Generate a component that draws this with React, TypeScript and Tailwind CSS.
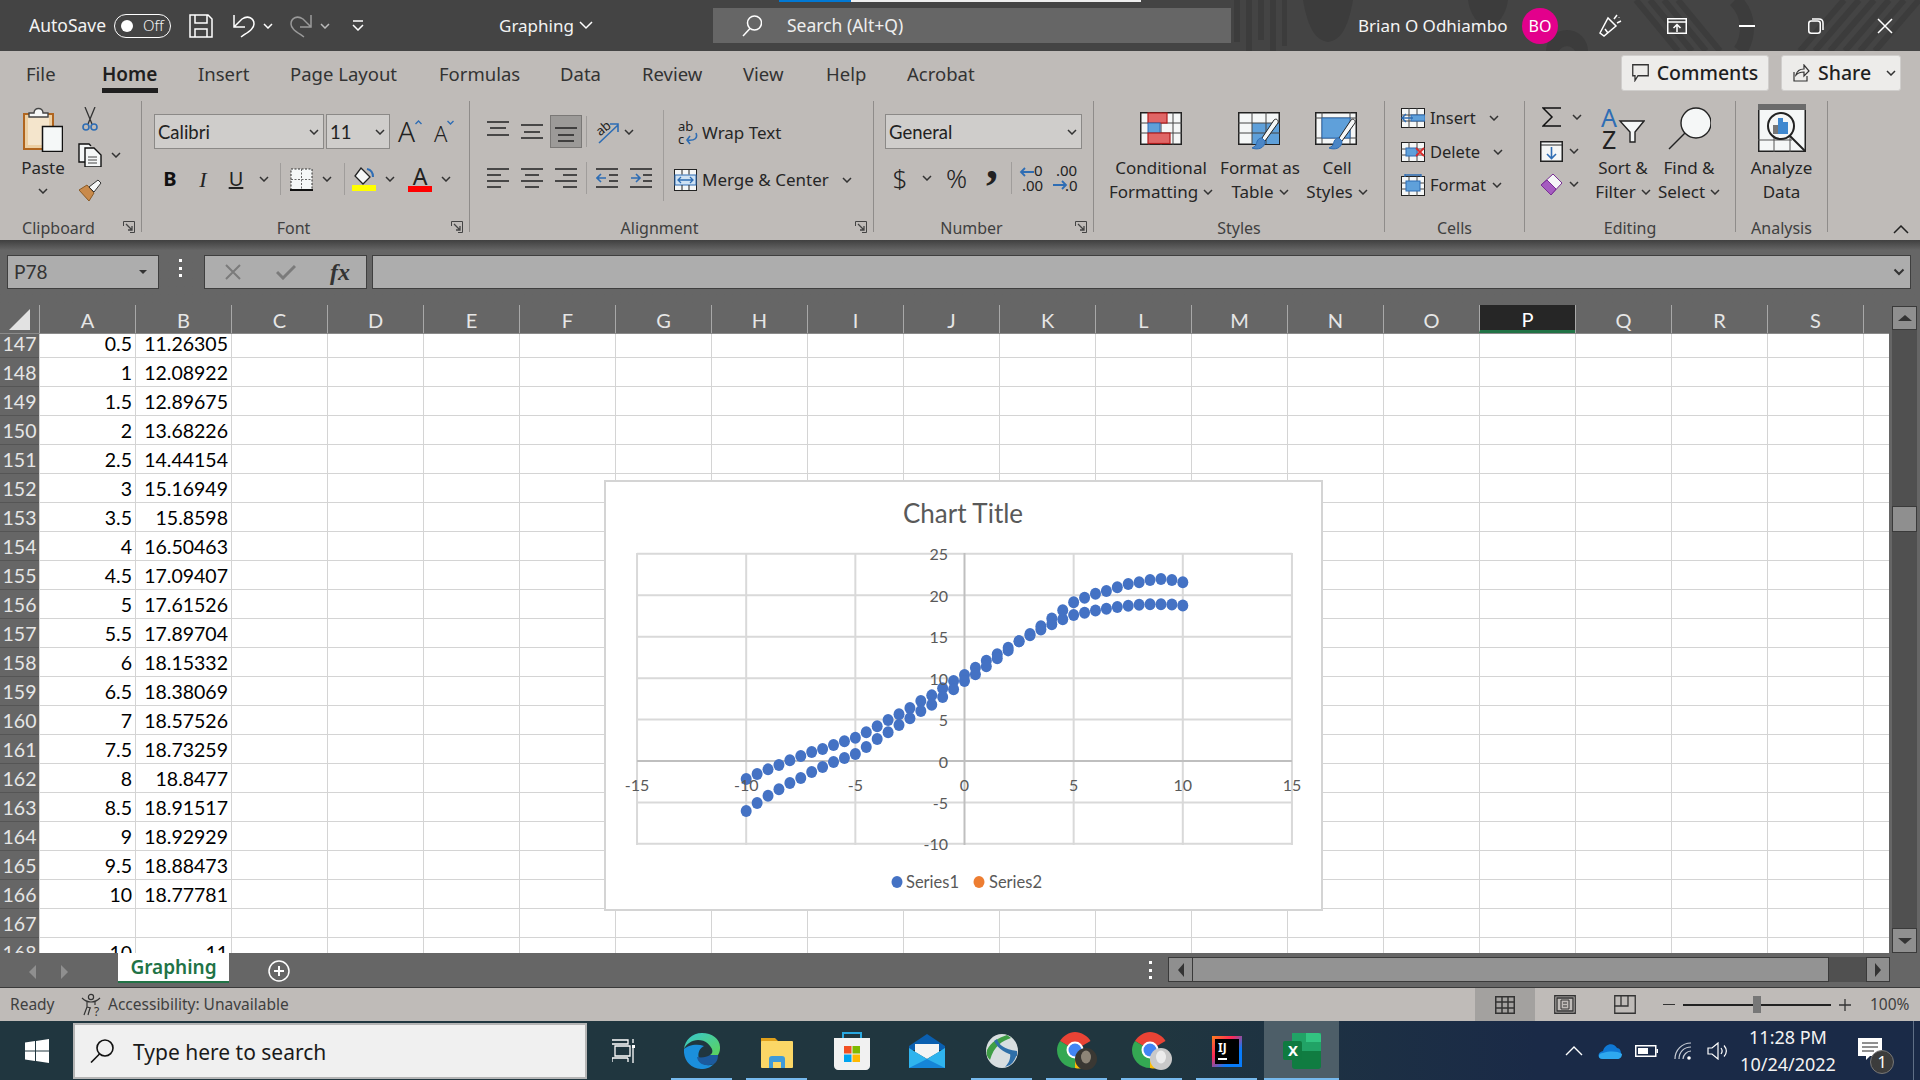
import React from "react";

const rows: [number, string, string][] = [
  [147, "0.5", "11.26305"],
  [148, "1", "12.08922"],
  [149, "1.5", "12.89675"],
  [150, "2", "13.68226"],
  [151, "2.5", "14.44154"],
  [152, "3", "15.16949"],
  [153, "3.5", "15.8598"],
  [154, "4", "16.50463"],
  [155, "4.5", "17.09407"],
  [156, "5", "17.61526"],
  [157, "5.5", "17.89704"],
  [158, "6", "18.15332"],
  [159, "6.5", "18.38069"],
  [160, "7", "18.57526"],
  [161, "7.5", "18.73259"],
  [162, "8", "18.8477"],
  [163, "8.5", "18.91517"],
  [164, "9", "18.92929"],
  [165, "9.5", "18.88473"],
  [166, "10", "18.77781"],
  [167, "", ""],
  [168, "10", "11"],
];

const cols = "ABCDEFGHIJKLMNOPQRS".split("");

const series1 = [
  -2.17, -1.57, -1.01, -0.48, 0.08, 0.6, 1.09, 1.45, 1.93, 2.37, 2.82, 3.46, 4.18, 4.95, 5.63, 6.4, 7.24, 7.92, 8.77, 9.65, 10.38,
  11.26305, 12.08922, 12.89675, 13.68226, 14.44154, 15.16949, 15.8598, 16.50463, 17.09407, 17.61526, 17.89704, 18.15332, 18.38069,
  18.57526, 18.73259, 18.8477, 18.91517, 18.92929, 18.88473, 18.77781,
];
const series2 = [
  -6.03, -5.07, -4.2, -3.4, -2.65, -2.05, -1.33, -0.72, -0.12, 0.36, 0.84, 1.69, 2.65, 3.46, 4.34, 5.15, 6.03, 6.8, 7.72, 8.65, 9.65,
  10.46, 11.42, 12.39, 13.35, 14.44, 15.33, 16.25, 17.2, 18.2, 19.15, 19.71, 20.19, 20.51, 20.96, 21.36, 21.56, 21.84, 21.96, 21.84, 21.56,
];

const px = (v: number) => 964.5 + 21.83 * v;
const py = (v: number) => 761 - 8.286 * v;

function Chev({ className = "", color = "#333333" }: { className?: string; color?: string }) {
  return (
    <svg width="10" height="6" viewBox="0 0 10 6" className={`shrink-0 ${className}`}>
      <path d="M1 1l4 4 4-4" fill="none" stroke={color} strokeWidth="1.5" />
    </svg>
  );
}

function Launcher() {
  return (
    <svg width="12" height="12" viewBox="0 0 12 12">
      <path d="M.5 5V.5h11v11H7" fill="none" stroke="#444" />
      <path d="M3 3l6 6M9 5v4H5" fill="none" stroke="#444" strokeWidth="1.3" />
    </svg>
  );
}

function Group({ w, label, launcher, children }: { w: string; label?: string; launcher?: boolean; children: React.ReactNode }) {
  return (
    <div className={`${w} h-[131px] shrink-0 flex flex-col border-r border-[#8f8c8a]`}>
      <div className="h-[115px] flex">{children}</div>
      <div className="h-[16px] flex text-[16px] leading-[24px] text-[#404040]">
        <div className="flex-1 text-center whitespace-nowrap">{label}</div>
        {launcher && (
          <div className="w-[24px] pt-[5px] pl-[6px]">
            <Launcher />
          </div>
        )}
      </div>
    </div>
  );
}

function Combo({ w, text }: { w: string; text: string }) {
  return (
    <div className={`${w} h-[35px] flex items-center justify-between bg-[#cfcdcb] border border-[#8b8987] pl-[3px] pr-[4px] font-['Lato'] text-[18.5px] text-[#222]`}>
      <span className="pt-[2px]">{text}</span>
      <Chev />
    </div>
  );
}

function BigBtn({ w, icon, l1, l2 }: { w: string; icon: React.ReactNode; l1: string; l2: string }) {
  return (
    <div className={`${w} flex flex-col items-center shrink-0`}>
      <div className="h-[55px] flex flex-col items-center">{icon}</div>
      <div className="h-[24px] leading-[24px] text-[17px] text-[#262626] whitespace-nowrap">{l1}</div>
      <div className="h-[24px] leading-[24px] text-[17px] text-[#262626] whitespace-nowrap flex items-center gap-[5px]">
        {l2}
        <Chev />
      </div>
    </div>
  );
}

function Sep({ className = "" }: { className?: string }) {
  return <div className={`w-px shrink-0 bg-[#a09d9b] ${className}`} />;
}

function Lines({ type }: { type: "top" | "mid" | "bot" | "left" | "center" | "right" }) {
  const d = {
    top: "M0 1h22M3 7h16M0 14h22",
    mid: "M0 1h22M3 8h16M0 14h22",
    bot: "M0 1h22M3 8h16M3 14h16",
    left: "M0 1h22M0 7h14M0 13h22M0 19h14",
    center: "M0 1h22M4 7h14M0 13h22M4 19h14",
    right: "M0 1h22M8 7h14M0 13h22M8 19h14",
  }[type];
  const h = type === "top" || type === "mid" || type === "bot" ? 15 : 20;
  return (
    <svg width="22" height={h} viewBox={`0 0 22 ${h}`} className="shrink-0">
      <path d={d} stroke="#222" strokeWidth="1.5" fill="none" />
    </svg>
  );
}

function Pattern() {
  return (
    <svg width="689" height="51" viewBox="1231 0 689 51" className="absolute right-0 top-0">
      <g fill="#3c3c3c">
        <rect x="1234" y="0" width="6" height="42" />
        <rect x="1246" y="0" width="6" height="51" />
        <rect x="1258" y="0" width="6" height="40" />
        <rect x="1270" y="0" width="6" height="51" />
        <rect x="1282" y="0" width="5" height="46" />
        <path d="M1303 0h50c-5 28-12 40-25 42-13-2-20-14-25-42z" />
        <path d="M1468 0h40c-2 15-10 25-20 27-10-2-18-12-20-27z" />
        <circle cx="1567" cy="51" r="21" />
      </g>
      <circle cx="1567" cy="55" r="9" fill="#444" />
      <g stroke="#3c3c3c" strokeWidth="6" fill="none">
        <path d="M1636 0l42 51M1650 0l42 51M1664 0l42 51M1678 0l42 51" />
        <path d="M1800 51l44-51M1815 51l44-51M1830 51l44-51M1845 51l44-51M1860 51l44-51M1875 51l44-51" />
        <path d="M1735 0c15 15 15 36 5 51" strokeWidth="14" />
      </g>
    </svg>
  );
}

function TitleBar() {
  return (
    <div className="relative h-[51px] shrink-0 bg-[#444444] flex items-center text-white">
      <Pattern />
      <div className="absolute left-[779px] top-0 w-[72px] h-[2px] bg-[#0078d4]" />
      <div className="absolute left-[851px] top-0 w-[290px] h-[2px] bg-[#eeeeee]" />
      <div className="relative w-[713px] shrink-0 flex items-center text-[17.5px] text-[#f3f3f3]">
        <div className="ml-[29px] w-[76px] whitespace-nowrap">AutoSave</div>
        <div className="ml-[9px] w-[57px] h-[24px] rounded-full border border-white flex items-center">
          <div className="ml-[6px] w-[12px] h-[12px] rounded-full bg-white" />
          <span className="ml-[10px] text-[15px] font-light">Off</span>
        </div>
        <svg width="24" height="24" viewBox="0 0 24 24" className="ml-[18px]">
          <path d="M1 1h18l4 4v18H1zM6 1v8h12V1M6 23v-8h12v8" fill="none" stroke="#fff" strokeWidth="1.5" />
        </svg>
        <svg width="22" height="24" viewBox="0 0 22 24" className="ml-[20px]">
          <path d="M1 1v12h11M1 13L9 5c6-4 12-1 12 5 0 5-6 8-13 13" fill="none" stroke="#fff" strokeWidth="1.5" />
        </svg>
        <Chev color="#fff" className="ml-[8px]" />
        <svg width="22" height="24" viewBox="0 0 22 24" className="ml-[17px]">
          <path d="M21 1v12H10M21 13L13 5C7 1 1 4 1 10c0 5 6 8 13 13" fill="none" stroke="#9a9a9a" strokeWidth="1.5" />
        </svg>
        <Chev color="#bbbbbb" className="ml-[8px]" />
        <svg width="12" height="11" viewBox="0 0 12 11" className="ml-[22px]">
          <path d="M1 1h10M1 5l5 5 5-5" fill="none" stroke="#fff" strokeWidth="1.5" />
        </svg>
        <div className="ml-[135px] w-[72px] whitespace-nowrap text-[17px]">Graphing</div>
        <svg width="14" height="9" viewBox="0 0 14 9" className="ml-[8px]">
          <path d="M1 1l6 6 6-6" fill="none" stroke="#fff" strokeWidth="1.5" />
        </svg>
      </div>
      <div className="relative w-[518px] h-[35px] shrink-0 bg-[#666666] flex items-center text-[#eeeeee] text-[17.5px]">
        <svg width="20" height="22" viewBox="0 0 20 22" className="ml-[29px]">
          <circle cx="12.5" cy="8" r="7" fill="none" stroke="#fff" strokeWidth="1.5" />
          <path d="M8 13.5L1 21" stroke="#fff" strokeWidth="1.5" />
        </svg>
        <span className="ml-[25px] whitespace-nowrap">Search (Alt+Q)</span>
      </div>
      <div className="relative flex-1 flex items-center">
        <div className="ml-[127px] w-[147px] whitespace-nowrap text-[17px] text-[#f5f5f5]">Brian O Odhiambo</div>
        <div className="ml-[17px] w-[36px] h-[36px] rounded-full bg-[#e3008c] flex items-center justify-center text-[16px]">BO</div>
        <svg width="24" height="24" viewBox="0 0 24 24" className="ml-[40px]">
          <path d="M2 19L10 4l8 8-12 10zM6 22l-4-3M7 15l3 4" fill="none" stroke="#fff" strokeWidth="1.5" />
          <path d="M16 5l3-4M19 9l4-2M21 3v.5" stroke="#fff" strokeWidth="1.5" fill="none" />
        </svg>
        <svg width="20" height="16" viewBox="0 0 20 16" className="ml-[45px]">
          <rect x=".75" y=".75" width="18.5" height="14.5" fill="none" stroke="#fff" strokeWidth="1.5" />
          <path d="M1 4h18M10 14V7M6.5 10L10 6.5l3.5 3.5" fill="none" stroke="#fff" strokeWidth="1.5" />
        </svg>
        <div className="ml-[52px] w-[16px] h-[2px] bg-white" />
        <svg width="16" height="16" viewBox="0 0 16 16" className="ml-[53px]">
          <rect x=".75" y="3" width="11.5" height="12.25" rx="2.5" fill="none" stroke="#fff" strokeWidth="1.5" />
          <path d="M4 1h7c2.5 0 4 1.5 4 4v7" fill="none" stroke="#fff" strokeWidth="1.5" />
        </svg>
        <svg width="16" height="16" viewBox="0 0 16 16" className="ml-[53px]">
          <path d="M1 1l14 14M15 1L1 15" stroke="#fff" strokeWidth="1.5" />
        </svg>
      </div>
    </div>
  );
}

function TabsRow() {
  const tabs: [string, string][] = [
    ["File", "ml-[26px] w-[31px]"],
    ["Home", "ml-[45px] w-[56px]"],
    ["Insert", "ml-[40px] w-[48px]"],
    ["Page Layout", "ml-[44px] w-[106px]"],
    ["Formulas", "ml-[43px] w-[80px]"],
    ["Data", "ml-[41px] w-[41px]"],
    ["Review", "ml-[41px] w-[59px]"],
    ["View", "ml-[42px] w-[41px]"],
    ["Help", "ml-[42px] w-[40px]"],
    ["Acrobat", "ml-[41px] w-[70px]"],
  ];
  return (
    <div className="h-[50px] flex items-start">
      {tabs.map(([t, m]) => (
        <div key={t} className={`${m} relative h-[42px] pt-[10px] leading-[26px] whitespace-nowrap ${t === "Home" ? "text-[19px] font-semibold text-[#1f1f1f] border-b-[5px] border-[#1f1f1f]" : "text-[18.5px] text-[#333]"}`}>
          {t}
        </div>
      ))}
      <div className="ml-auto mt-[4px] flex">
        <div className="w-[148px] h-[36px] rounded-[3px] bg-[#edecea] border border-[#d0cecc] flex items-center justify-center gap-[8px] text-[19.5px] font-medium text-[#1f1f1f]">
          <svg width="17" height="18" viewBox="0 0 17 18">
            <path d="M.75.75h15.5v11H6L3 16.5v-4.75H.75z" fill="none" stroke="#333" strokeWidth="1.3" />
          </svg>
          Comments
        </div>
        <div className="ml-[12px] mr-[19px] w-[120px] h-[36px] rounded-[3px] bg-[#edecea] border border-[#d0cecc] flex items-center text-[19.5px] font-medium text-[#1f1f1f]">
          <svg width="17" height="18" viewBox="0 0 17 18" className="ml-[11px]">
            <path d="M1 8v9h13v-5M3 11c1-4 4-6 8-6V1l5 6-5 5V8c-3 0-6 1-8 3z" fill="none" stroke="#333" strokeWidth="1.2" />
          </svg>
          <span className="ml-[8px]">Share</span>
          <Chev className="ml-[15px]" />
        </div>
      </div>
    </div>
  );
}

function PasteIcon() {
  return (
    <svg width="40" height="45" viewBox="0 0 40 45" className="mt-[6px]">
      <rect x="1" y="7" width="29" height="35" fill="#eccfa3" stroke="#b0651f" strokeWidth="2" />
      <path d="M5 10h21v28H5z" fill="#f4e5cc" />
      <path d="M6 10V6h5c0-6 9-6 9 0h5v4z" fill="#f5f7f7" stroke="#444" strokeWidth="1.4" />
      <rect x="19.5" y="19.5" width="20" height="25" fill="#f5f8f8" stroke="#111" strokeWidth="1.5" />
    </svg>
  );
}

function BigBtnPaste() {
  return (
    <div className="flex flex-col items-center">
      <div className="h-[55px]">
        <PasteIcon />
      </div>
      <div className="h-[24px] leading-[24px] text-[17px] text-[#262626]">Paste</div>
      <Chev className="mt-[8px]" />
    </div>
  );
}

function ClipboardGroup() {
  return (
    <Group w="w-[142px]" label="Clipboard" launcher>
      <div className="ml-[6px] w-[74px]">
        <BigBtnPaste />
      </div>
      <div className="flex flex-col">
        <svg width="16" height="24" viewBox="0 0 16 24" className="ml-[2px] mt-[6px]">
          <path d="M3 0l7 17M13 0L6 17" stroke="#333" strokeWidth="1.3" fill="none" />
          <circle cx="4" cy="20" r="3" fill="none" stroke="#2e6db4" strokeWidth="1.6" />
          <circle cx="12" cy="20" r="3" fill="none" stroke="#2e6db4" strokeWidth="1.6" />
        </svg>
        <div className="flex items-center ml-[-2px] mt-[12px]">
          <svg width="24" height="24" viewBox="0 0 24 24">
            <path d="M9 19H1V1h10l2 2" fill="#f5f7f7" stroke="#111" strokeWidth="1.4" />
            <path d="M7 5h9l7 7v12H7z" fill="#f5f7f7" stroke="#111" strokeWidth="1.4" />
            <path d="M10 14h9M10 17h9M10 20h9" stroke="#444" />
          </svg>
          <Chev className="ml-[9px]" />
        </div>
        <svg width="23" height="22" viewBox="0 0 23 22" className="ml-[-1px] mt-[12px]">
          <path d="M0 11l8-5 7 8-5 8z" fill="#c98a4b" stroke="#8a5a25" />
          <path d="M10 8l9-7 3 3-7 9z" fill="#f5f7f7" stroke="#333" />
        </svg>
      </div>
    </Group>
  );
}

function FontGroup() {
  return (
    <Group w="w-[328px]" label="Font" launcher>
      <div className="flex flex-col">
        <div className="mt-[13px] h-[35px] flex ml-[12px]">
          <Combo w="w-[170px]" text="Calibri" />
          <Combo w="w-[64px] ml-[2px]" text="11" />
          <div className="ml-[8px] w-[26px] flex items-start text-[#222]">
            <span className="text-[28px] leading-[35px] font-light">A</span>
            <svg width="7" height="5" viewBox="0 0 7 5" className="mt-[6px] shrink-0">
              <path d="M.5 4l3-3 3 3" fill="none" stroke="#2e6db4" strokeWidth="1.4" />
            </svg>
          </div>
          <div className="ml-[10px] w-[26px] flex items-start text-[#222]">
            <span className="text-[22px] leading-[38px] font-light">A</span>
            <svg width="7" height="5" viewBox="0 0 7 5" className="mt-[6px] shrink-0">
              <path d="M.5 1l3 3 3-3" fill="none" stroke="#2e6db4" strokeWidth="1.4" />
            </svg>
          </div>
        </div>
        <div className="mt-[13px] h-[34px] ml-[12px] flex items-center">
          <div className="w-[32px] text-center font-bold text-[20px] text-[#111]">B</div>
          <div className="w-[34px] text-center italic font-['Liberation_Serif'] text-[22px] text-[#222]">I</div>
          <div className="w-[32px] text-center underline text-[20px] text-[#222]">U</div>
          <div className="w-[24px] flex justify-center">
            <Chev />
          </div>
          <div className="w-[8px] flex justify-center h-[32px]">
            <Sep />
          </div>
          <div className="w-[34px] flex justify-center">
            <svg width="23" height="23" viewBox="0 0 23 23">
              <rect x="1" y="1" width="21" height="21" fill="#f5f7f7" stroke="#333" strokeDasharray="2 1.5" />
              <path d="M11.5 1v20M1 11.5h21" stroke="#666" strokeDasharray="2 1.5" />
              <path d="M0 22h23" stroke="#111" strokeWidth="2" />
            </svg>
          </div>
          <div className="w-[18px] flex justify-center">
            <Chev />
          </div>
          <div className="w-[16px] flex justify-center h-[32px]">
            <Sep />
          </div>
          <svg width="24" height="24" viewBox="0 0 24 24">
            <path d="M9 1l9 9-7 7-8-8z" fill="#f5f7f7" stroke="#222" strokeWidth="1.3" />
            <path d="M15 2c5 1 6 5 6 8" fill="none" stroke="#2e6db4" strokeWidth="2" />
            <rect x="0" y="18" width="24" height="6" fill="#ffff00" />
          </svg>
          <div className="w-[28px] flex justify-center">
            <Chev />
          </div>
          <div className="w-[32px] flex flex-col items-center text-[#222]">
            <span className="text-[23px] leading-[20px] h-[20px]">A</span>
            <div className="w-[24px] h-[6px] bg-[#ff0000]" />
          </div>
          <div className="w-[20px] flex justify-center">
            <Chev />
          </div>
        </div>
      </div>
    </Group>
  );
}

function AlignGroup() {
  return (
    <Group w="w-[404px]" label="Alignment" launcher>
      <div className="w-[193px] shrink-0 flex flex-col">
        <div className="mt-[14px] h-[33px] flex items-center">
          <div className="ml-[17px] mt-[-7px]">
            <Lines type="top" />
          </div>
          <div className="ml-[12px]">
            <Lines type="mid" />
          </div>
          <div className="ml-[7px] w-[32px] h-[33px] bg-[#9c9a98] border border-[#7a7876] flex items-center justify-center pt-[6px]">
            <Lines type="bot" />
          </div>
          <Sep className="ml-[4px] h-[31px]" />
          <svg width="25" height="26" viewBox="0 0 25 26" className="ml-[8px]">
            <text x="1" y="14" fontSize="13" fill="#222" transform="rotate(-40 8 10)" fontFamily="Noto Sans">ab</text>
            <path d="M4 24L23 6M15 5h8v8" fill="none" stroke="#2e6db4" strokeWidth="1.6" />
          </svg>
          <Chev className="ml-[4px]" />
        </div>
        <div className="mt-[12px] h-[36px] flex items-center">
          <div className="ml-[17px]">
            <Lines type="left" />
          </div>
          <div className="ml-[12px]">
            <Lines type="center" />
          </div>
          <div className="ml-[12px]">
            <Lines type="right" />
          </div>
          <Sep className="ml-[9px] h-[32px]" />
          <svg width="22" height="20" viewBox="0 0 22 20" className="ml-[9px]">
            <path d="M0 1h22M13 7h9M13 13h9M0 19h22" stroke="#222" strokeWidth="1.5" />
            <path d="M10 10H1M5 6l-4 4 4 4" fill="none" stroke="#2e6db4" strokeWidth="1.6" />
          </svg>
          <svg width="22" height="20" viewBox="0 0 22 20" className="ml-[12px]">
            <path d="M0 1h22M13 7h9M13 13h9M0 19h22" stroke="#222" strokeWidth="1.5" />
            <path d="M1 10h9M6 6l4 4-4 4" fill="none" stroke="#2e6db4" strokeWidth="1.6" />
          </svg>
        </div>
      </div>
      <Sep className="mt-[9px] h-[91px]" />
      <div className="flex flex-col text-[17px] text-[#262626]">
        <div className="mt-[15px] h-[34px] flex items-center">
          <svg width="20" height="26" viewBox="0 0 20 26" className="ml-[14px]">
            <text x="0" y="11" fontSize="13" fill="#222" fontFamily="Noto Sans">ab</text>
            <text x="0" y="24" fontSize="13" fill="#222" fontFamily="Noto Sans">c</text>
            <path d="M18 13c2 5-1 8-9 7M12 16l-3 4 3 4" fill="none" stroke="#2e6db4" strokeWidth="1.6" />
          </svg>
          <span className="ml-[4px] whitespace-nowrap">Wrap Text</span>
        </div>
        <div className="mt-[13px] h-[34px] flex items-center">
          <svg width="23" height="22" viewBox="0 0 23 22" className="ml-[10px]">
            <rect x=".5" y=".5" width="22" height="21" fill="#f5f7f7" stroke="#222" />
            <rect x="1" y="6" width="21" height="10" fill="#cfe2f3" stroke="#2e6db4" />
            <path d="M8 .5v5M15 .5v5M8 16v5M15 16v5" stroke="#222" />
            <path d="M4 11h15M7 8l-3 3 3 3M16 8l3 3-3 3" fill="none" stroke="#2e6db4" strokeWidth="1.3" />
          </svg>
          <span className="ml-[5px] whitespace-nowrap w-[126px]">Merge &amp; Center</span>
          <Chev className="ml-[14px]" />
        </div>
      </div>
    </Group>
  );
}

function NumberGroup() {
  return (
    <Group w="w-[220px]" label="Number" launcher>
      <div className="flex flex-col">
        <div className="mt-[13px] ml-[11px]">
          <Combo w="w-[197px]" text="General" />
        </div>
        <div className="mt-[12px] h-[34px] flex items-center text-[#222]">
          <div className="ml-[16px] w-[20px] text-center text-[26px] font-light">$</div>
          <Chev className="ml-[12px]" />
          <div className="ml-[14px] w-[22px] text-[26px] leading-none font-light">%</div>
          <div className="ml-[18px] w-[12px] h-[34px] font-bold font-['Liberation_Serif'] text-[48px] leading-[34px] -translate-y-[16px]">,</div>
          <Sep className="ml-[13px] h-[32px]" />
          <svg width="23" height="28" viewBox="0 0 23 28" className="ml-[8px] overflow-visible">
            <text x="14" y="12" fontSize="15" fill="#222" fontFamily="Noto Sans">0</text>
            <text x="2" y="27" fontSize="15" fill="#222" fontFamily="Noto Sans">.00</text>
            <path d="M14 8H1M5 4L1 8l4 4" fill="none" stroke="#2e6db4" strokeWidth="1.8" />
          </svg>
          <svg width="24" height="28" viewBox="0 0 24 28" className="ml-[10px] overflow-visible">
            <text x="3" y="12" fontSize="15" fill="#222" fontFamily="Noto Sans">.00</text>
            <text x="12" y="27" fontSize="15" fill="#222" fontFamily="Noto Sans">.0</text>
            <path d="M0 21h13M9 17l4 4-4 4" fill="none" stroke="#2e6db4" strokeWidth="1.8" />
          </svg>
        </div>
      </div>
    </Group>
  );
}

function Brush() {
  return (
    <g>
      <path d="M36 8L24 26l3 3L40 11c1-3-2-5-4-3z" fill="#f5f7f7" stroke="#222" />
      <path d="M24 26c-4 0-5 3-6 7-1 2-3 2-4 3 5 2 13 1 13-7z" fill="#4b86c6" stroke="#2e6db4" />
    </g>
  );
}

function StylesGroup() {
  return (
    <Group w="w-[291px]" label="Styles">
      <div className="ml-[6px]" />
      <BigBtn
        w="w-[122px]"
        l1="Conditional"
        l2="Formatting"
        icon={
          <svg width="42" height="33" viewBox="0 0 42 33" className="mt-[11px]">
            <rect x=".75" y=".75" width="40.5" height="31.5" fill="#f5f7f7" stroke="#222" strokeWidth="1.5" />
            <path d="M9 0v33M33 0v33M0 11h42M0 21h42M21 0v33" stroke="#444" />
            <rect x="8" y="1" width="19" height="10" fill="#e06666" stroke="#b01c1c" strokeWidth="1.2" />
            <rect x="8" y="11" width="12" height="10" fill="#5fa0da" stroke="#2e6db4" strokeWidth="1" />
            <rect x="8" y="21" width="22" height="10.5" fill="#e06666" stroke="#b01c1c" strokeWidth="1.2" />
          </svg>
        }
      />
      <BigBtn
        w="w-[76px]"
        l1="Format as"
        l2="Table"
        icon={
          <svg width="44" height="41" viewBox="0 0 44 41" className="mt-[11px]">
            <rect x=".75" y=".75" width="40.5" height="31.5" fill="#f5f7f7" stroke="#222" strokeWidth="1.5" />
            <rect x="14" y="11" width="27" height="21" fill="#5fa0da" />
            <path d="M14 0v32M28 0v32M0 11h42M0 21h42" stroke="#444" />
            <Brush />
          </svg>
        }
      />
      <BigBtn
        w="w-[78px]"
        l1="Cell"
        l2="Styles"
        icon={
          <svg width="44" height="41" viewBox="0 0 44 41" className="mt-[11px]">
            <rect x=".75" y=".75" width="40.5" height="31.5" fill="#f5f7f7" stroke="#222" strokeWidth="1.5" />
            <path d="M7 0v32M35 0v32M0 6h42M0 26h42" stroke="#444" />
            <rect x="7" y="6" width="28" height="20" fill="#5fa0da" stroke="#2e6db4" />
            <Brush />
          </svg>
        }
      />
    </Group>
  );
}

function CellsGroup() {
  const base = (
    <g>
      <rect x=".5" y=".5" width="23" height="19" fill="#f5f7f7" stroke="#222" />
      <path d="M8 0v20M16 0v20M0 7h24M0 13h24" stroke="#444" />
    </g>
  );
  return (
    <Group w="w-[140px]" label="Cells">
      <div className="flex flex-col text-[16.5px] text-[#262626]">
        <div className="mt-[2px] h-[30px] flex items-center">
          <svg width="24" height="20" viewBox="0 0 24 20" className="ml-[16px]">
            {base}
            <rect x="10" y="7" width="14" height="6" fill="#5fa0da" stroke="#2e6db4" />
            <path d="M12 10H1M5 6l-4 4 4 4" fill="none" stroke="#2e6db4" strokeWidth="1.5" />
          </svg>
          <span className="ml-[5px]">Insert</span>
          <Chev className="ml-[13px]" />
        </div>
        <div className="mt-[4px] h-[30px] flex items-center">
          <svg width="24" height="20" viewBox="0 0 24 20" className="ml-[16px]">
            {base}
            <rect x="5" y="6" width="11" height="8" fill="#5fa0da" stroke="#2e6db4" />
            <path d="M15 6l8 8M23 6l-8 8" stroke="#d92b2b" strokeWidth="1.8" />
          </svg>
          <span className="ml-[5px]">Delete</span>
          <Chev className="ml-[13px]" />
        </div>
        <div className="mt-[3px] h-[30px] flex items-center">
          <svg width="24" height="22" viewBox="0 0 24 22" className="ml-[16px]">
            <g transform="translate(0 2)">{base}</g>
            <rect x="5" y="7" width="14" height="10" fill="#5fa0da" stroke="#2e6db4" />
            <path d="M4 1h16M4 0v3M20 0v3" fill="none" stroke="#2e6db4" strokeWidth="1.3" />
          </svg>
          <span className="ml-[5px]">Format</span>
          <Chev className="ml-[6px]" />
        </div>
      </div>
    </Group>
  );
}

function EditingGroup() {
  return (
    <Group w="w-[211px]" label="Editing">
      <div className="w-[63px] shrink-0 flex flex-col">
        <div className="mt-[1px] h-[30px] flex items-center">
          <svg width="19" height="20" viewBox="0 0 19 20" className="ml-[17px]">
            <path d="M19 1H1l9 9-9 9h18" fill="none" stroke="#111" strokeWidth="1.5" />
          </svg>
          <Chev className="ml-[11px]" />
        </div>
        <div className="mt-[4px] h-[30px] flex items-center">
          <svg width="23" height="21" viewBox="0 0 23 21" className="ml-[15px]">
            <rect x=".75" y=".75" width="21.5" height="19.5" fill="#f5f7f7" stroke="#222" strokeWidth="1.5" />
            <path d="M0 4h23" stroke="#222" />
            <path d="M11.5 6v11M7 13l4.5 4.5L16 13" fill="none" stroke="#2e6db4" strokeWidth="1.6" />
          </svg>
          <Chev className="ml-[6px]" />
        </div>
        <div className="mt-[3px] h-[30px] flex items-center">
          <svg width="23" height="23" viewBox="0 0 23 23" className="ml-[15px]">
            <path d="M1 12L13 1l9 9-11 12z" fill="#f5f7f7" stroke="#7a2f96" />
            <path d="M1 12l6-5 9 9-5 6z" fill="#a55cc0" stroke="#7a2f96" />
          </svg>
          <Chev className="ml-[6px]" />
        </div>
      </div>
      <BigBtn
        w="w-[70px]"
        l1="Sort &"
        l2="Filter"
        icon={
          <svg width="44" height="41" viewBox="0 0 44 41" className="mt-[7px]">
            <text x="0" y="19" fontSize="25" fill="#2e6db4" fontFamily="Noto Sans">A</text>
            <text x="1" y="41" fontSize="25" fill="#222" fontFamily="Noto Sans">Z</text>
            <path d="M19 13h24l-9 11v10h-5V24z" fill="#f5f7f7" stroke="#222" strokeWidth="1.4" />
          </svg>
        }
      />
      <BigBtn
        w="w-[62px]"
        l1="Find &"
        l2="Select"
        icon={
          <svg width="43" height="43" viewBox="0 0 43 43" className="mt-[6px]">
            <ellipse cx="28" cy="16" rx="15" ry="15" fill="#f5f7f7" stroke="#222" strokeWidth="1.4" />
            <path d="M17 26L1 42" stroke="#222" strokeWidth="1.5" />
          </svg>
        }
      />
    </Group>
  );
}

function AnalysisGroup() {
  return (
    <Group w="w-[92px]" label="Analysis">
      <div className="w-full">
        <div className="flex flex-col items-center">
          <div className="h-[55px]">
            <svg width="48" height="48" viewBox="0 0 48 48" className="mt-[3px]">
              <rect x=".75" y=".75" width="46.5" height="46.5" fill="#f5f7f7" stroke="#222" strokeWidth="1.5" />
              <rect x="0" y="0" width="48" height="6" fill="#6b6b6b" />
              <path d="M16 28v20M32 30v18M0 36h34" stroke="#555" />
              <circle cx="23" cy="22" r="13" fill="#f5f7f7" stroke="#222" strokeWidth="2" />
              <rect x="15" y="21" width="5" height="9" fill="#777" />
              <rect x="20" y="14" width="5" height="16" fill="#3f88cf" />
              <rect x="25" y="18" width="5" height="12" fill="#3f88cf" />
              <path d="M32 32l15 15" stroke="#222" strokeWidth="2" />
            </svg>
          </div>
          <div className="h-[24px] leading-[24px] text-[17px] text-[#262626]">Analyze</div>
          <div className="h-[24px] leading-[24px] text-[17px] text-[#262626]">Data</div>
        </div>
      </div>
    </Group>
  );
}

function Ribbon() {
  return (
    <div className="relative h-[189px] shrink-0 bg-[#bfbbb8]">
      <TabsRow />
      <div className="flex">
        <ClipboardGroup />
        <FontGroup />
        <AlignGroup />
        <NumberGroup />
        <StylesGroup />
        <CellsGroup />
        <EditingGroup />
        <AnalysisGroup />
        <div className="flex-1 flex justify-end items-end pr-[11px] pb-[0px]">
          <svg width="16" height="9" viewBox="0 0 16 9" className="mt-[124px]">
            <path d="M1 8l7-7 7 7" fill="none" stroke="#222" strokeWidth="1.5" />
          </svg>
        </div>
      </div>
    </div>
  );
}

function FormulaBar() {
  return (
    <div className="h-[65px] shrink-0 bg-linear-to-b from-[#404040] to-[#666666] to-[16%] flex items-start pt-[15px]">
      <div className="ml-[7px] w-[152px] h-[34px] bg-[#adadad] border border-[#3f3f3f] flex items-center justify-between pl-[6px] pr-[11px] font-['Lato'] text-[19px] text-[#333]">
        <span>P78</span>
        <div className="w-0 h-0 border-x-[4px] border-x-transparent border-t-[4px] border-t-[#333]" />
      </div>
      <div className="ml-[19px] mt-[4px] w-[4px] h-[18px] flex flex-col justify-between items-center">
        <div className="w-[3px] h-[3px] bg-white" />
        <div className="w-[3px] h-[3px] bg-white" />
        <div className="w-[3px] h-[3px] bg-white" />
      </div>
      <div className="ml-[22px] w-[163px] h-[34px] bg-[#adadad] border border-[#3f3f3f] flex items-center">
        <svg width="16" height="16" viewBox="0 0 16 16" className="ml-[20px]">
          <path d="M1 1l14 14M15 1L1 15" stroke="#7b7b7b" strokeWidth="2" />
        </svg>
        <svg width="20" height="16" viewBox="0 0 20 16" className="ml-[35px]">
          <path d="M1 8l6 6L19 2" fill="none" stroke="#7b7b7b" strokeWidth="3" />
        </svg>
        <span className="ml-[34px] font-['Liberation_Serif'] italic font-bold text-[24px] text-[#333]">fx</span>
      </div>
      <div className="ml-[5px] w-[1539px] h-[34px] bg-[#adadad] border border-[#3f3f3f] flex items-center justify-end pr-[5px]">
        <svg width="12" height="8" viewBox="0 0 12 8">
          <path d="M1.5 1.5L6 6l4.5-4.5" fill="none" stroke="#333" strokeWidth="2" />
        </svg>
      </div>
    </div>
  );
}

function Chart() {
  const xt = [-15, -10, -5, 0, 5, 10, 15];
  const yt = [25, 20, 15, 10, 5, 0, -5, -10];
  return (
    <div className="absolute left-[604px] top-[146px] w-[719px] h-[431px] box-border border-2 border-[#d4d4d4] bg-white">
      <svg width="715" height="427" viewBox="606 482 715 427" className="font-['Lato']">
        {yt.map((v) =>
          v === 0 ? null : <line key={v} x1="637" x2="1292" y1={py(v)} y2={py(v)} stroke="#d9d9d9" strokeWidth="2" />,
        )}
        {xt.map((v) =>
          v === 0 ? null : <line key={v} x1={px(v)} x2={px(v)} y1="553" y2="845" stroke="#d9d9d9" strokeWidth="2" />,
        )}
        <line x1="637" x2="1292" y1={py(0)} y2={py(0)} stroke="#bfbfbf" strokeWidth="2" />
        <line x1={px(0)} x2={px(0)} y1="553" y2="845" stroke="#bfbfbf" strokeWidth="2" />
        {[series1, series2].map((s, i) =>
          s.map((v, j) => <ellipse key={`${i}-${j}`} cx={px(-10 + j * 0.5)} cy={py(v)} rx="5.5" ry="6" fill="#4472c4" />),
        )}
        <text x="963" y="513" textAnchor="middle" dominantBaseline="central" fontSize="26" fill="#595959">Chart Title</text>
        {yt.map((v) => (
          <text key={v} x="948" y={py(v)} textAnchor="end" dominantBaseline="central" fontSize="16" fill="#595959">{v}</text>
        ))}
        {xt.map((v) => (
          <text key={v} x={px(v)} y="784" textAnchor="middle" dominantBaseline="central" fontSize="16" fill="#595959">{v}</text>
        ))}
        <ellipse cx="897" cy="882" rx="5.5" ry="6" fill="#4472c4" />
        <text x="906" y="882" dominantBaseline="central" fontSize="16.5" fill="#595959">Series1</text>
        <ellipse cx="979" cy="882" rx="5.5" ry="6" fill="#ed7d31" />
        <text x="989" y="882" dominantBaseline="central" fontSize="16.5" fill="#595959">Series2</text>
      </svg>
    </div>
  );
}

function Sheet() {
  return (
    <div className="h-[648px] shrink-0 flex bg-[#666666]">
      <div className="w-[1889px] shrink-0 flex flex-col">
        <div className="h-[28px] shrink-0 flex font-['Lato'] text-[20px] text-[#e6e6e6]">
          <div className="w-[39px] shrink-0 flex items-center justify-center">
            <div className="w-0 h-0 border-b-[21px] border-b-[#e2e2e2] border-l-[21px] border-l-transparent mt-[1px]" />
          </div>
          {cols.map((c) => (
            <div key={c} className={`w-[96px] shrink-0 box-border border-l border-[#a8a8a8] flex items-center justify-center pt-[2px] ${c === "P" ? "bg-[#262626] text-white border-b-[3px] border-b-[#217346]" : ""}`}>
              {c}
            </div>
          ))}
          <div className="flex-1 border-l border-[#a8a8a8]" />
        </div>
        <div className="relative flex-1 overflow-hidden border-t border-[#8a8a8a] bg-white font-['Lato'] text-[19.5px] text-black">
          {rows.map(([n, a, b]) => (
            <div key={n} className={`flex ${n === 147 ? "h-[24px]" : "h-[29px]"} box-border border-b border-[#d4d4d4]`}>
              <div className="w-[39px] shrink-0 bg-[#666666] text-[#e6e6e6] flex items-end justify-center pb-[2px] leading-[22px] border-b border-[#555555] mb-[-1px]">{n}</div>
              <div className="w-[96px] shrink-0 box-border border-l border-[#d4d4d4] flex items-end justify-end pr-[3px] pb-[2px] leading-[22px]">{a}</div>
              <div className="w-[96px] shrink-0 box-border border-l border-[#d4d4d4] flex items-end justify-end pr-[3px] pb-[2px] leading-[22px]">{b}</div>
              {cols.slice(2).map((c) => (
                <div key={c} className="w-[96px] shrink-0 box-border border-l border-[#d4d4d4]" />
              ))}
              <div className="flex-1 border-l border-[#d4d4d4]" />
            </div>
          ))}
          <Chart />
        </div>
      </div>
      <div className="ml-[3px] w-[25px] shrink-0 mt-px bg-[#505050] flex flex-col">
        <div className="h-[24px] bg-[#8f8f8f] border border-[#3a3a3a] flex items-center justify-center">
          <div className="w-0 h-0 border-x-[7px] border-x-transparent border-b-[6px] border-b-[#333]" />
        </div>
        <div className="mt-[176px] h-[26px] bg-[#8f8f8f] border border-[#3a3a3a]" />
        <div className="mt-auto h-[25px] bg-[#8f8f8f] border border-[#3a3a3a] flex items-center justify-center">
          <div className="w-0 h-0 border-x-[7px] border-x-transparent border-t-[6px] border-t-[#333]" />
        </div>
      </div>
    </div>
  );
}

function SheetBar() {
  return (
    <div className="h-[35px] shrink-0 bg-[#666666] border-b border-[#3a3a3a] flex items-start">
      <div className="ml-[29px] mt-[12px] w-0 h-0 border-y-[7px] border-y-transparent border-r-[7px] border-r-[#8f8f8f]" />
      <div className="ml-[25px] mt-[12px] w-0 h-0 border-y-[7px] border-y-transparent border-l-[7px] border-l-[#8f8f8f]" />
      <div className="ml-[50px] w-[111px] h-[30px] bg-white border-b-2 border-[#217346] flex items-center justify-center font-semibold text-[19px] text-[#217346]">Graphing</div>
      <svg width="22" height="22" viewBox="0 0 22 22" className="ml-[39px] mt-[7px]">
        <circle cx="11" cy="11" r="10" fill="none" stroke="#fff" strokeWidth="1.5" />
        <path d="M11 6v10M6 11h10" stroke="#fff" strokeWidth="2" />
      </svg>
      <div className="ml-[859px] mt-[8px] w-[3px] h-[18px] flex flex-col justify-between">
        <div className="h-[3px] bg-white" />
        <div className="h-[3px] bg-white" />
        <div className="h-[3px] bg-white" />
      </div>
      <div className="ml-[16px] mt-[4px] h-[25px] flex">
        <div className="w-[25px] bg-[#8f8f8f] border border-[#3a3a3a] flex items-center justify-center">
          <div className="w-0 h-0 border-y-[7px] border-y-transparent border-r-[6px] border-r-[#333]" />
        </div>
        <div className="w-[636px] bg-[#939393] border-y border-r border-[#3a3a3a]" />
        <div className="w-[37px] bg-[#505050]" />
        <div className="w-[24px] bg-[#8f8f8f] border border-[#3a3a3a] flex items-center justify-center">
          <div className="w-0 h-0 border-y-[7px] border-y-transparent border-l-[6px] border-l-[#333]" />
        </div>
      </div>
    </div>
  );
}

function StatusBar() {
  return (
    <div className="h-[33px] shrink-0 bg-[#bfbbb8] flex items-center text-[15.5px] text-[#404040]">
      <span className="ml-[10px] w-[42px]">Ready</span>
      <svg width="22" height="24" viewBox="0 0 22 24" className="ml-[29px]">
        <circle cx="10" cy="4" r="2.6" fill="none" stroke="#333" strokeWidth="1.2" />
        <path d="M1 5c3 3 5 4 9 4s6-1 9-4M6 9v5l-3 8M14 9v3M6 14l4 1M9 15l-2 7" fill="none" stroke="#333" strokeWidth="1.2" />
        <text x="13" y="23" fontSize="12" fill="#333" fontFamily="Noto Sans">?</text>
      </svg>
      <span className="ml-[5px] whitespace-nowrap">Accessibility: Unavailable</span>
      <div className="ml-auto flex items-center h-full">
        <div className="w-[60px] h-full bg-[#a3a19f] flex items-center justify-center">
          <svg width="20" height="18" viewBox="0 0 20 18">
            <path d="M.75.75h18.5v16.5H.75zM7 0v18M13 0v18M0 6h20M0 12h20" fill="none" stroke="#333" strokeWidth="1.5" />
          </svg>
        </div>
        <svg width="22" height="19" viewBox="0 0 22 19" className="ml-[19px]">
          <path d="M.75.75h20.5v17.5H.75zM3 3h16v13H3z" fill="none" stroke="#333" strokeWidth="1.3" />
          <path d="M7 5h8v9H7zM9 8h4M9 11h4" fill="none" stroke="#333" />
        </svg>
        <svg width="22" height="19" viewBox="0 0 22 19" className="ml-[38px]">
          <path d="M.75.75h20.5v17.5H.75zM0 11h14V0M7 0v11" fill="none" stroke="#333" strokeWidth="1.3" />
        </svg>
        <div className="ml-[27px] w-[12px] h-[1.5px] bg-[#333]" />
        <div className="ml-[8px] w-[148px] h-[2px] bg-[#222] flex items-center">
          <div className="ml-[70px] w-[8px] h-[17px] bg-[#777] shrink-0" />
        </div>
        <svg width="12" height="12" viewBox="0 0 12 12" className="ml-[8px]">
          <path d="M6 0v12M0 6h12" stroke="#333" strokeWidth="1.3" />
        </svg>
        <span className="ml-[19px] mr-[11px] w-[39px] whitespace-nowrap">100%</span>
      </div>
    </div>
  );
}

function Edge() {
  return (
    <svg width="36" height="36" viewBox="0 0 36 36">
      <defs>
        <linearGradient id="edge1" x1="0" y1="0" x2="1" y2="1">
          <stop offset="0" stopColor="#37c6d0" />
          <stop offset="1" stopColor="#5cd25a" />
        </linearGradient>
      </defs>
      <path d="M18 0C8 0 1 7 0 16c2-5 8-9 14-9 8 0 12 5 14 9 1 3 0 5-2 6h8c2-3 2-6 2-8C36 6 28 0 18 0z" fill="url(#edge1)" />
      <path d="M0 16c-1 10 6 20 17 20 6 0 10-2 13-5-7 3-13 0-15-5-2-6 1-11 5-13-8-3-17 0-20 3z" fill="#1b8fdc" />
      <path d="M13 24c1 7 8 10 17 7 3-2 4-5 4-9h-8c-3 2-8 3-13 2z" fill="#1c5a9d" />
    </svg>
  );
}

function Folder() {
  return (
    <svg width="32" height="34" viewBox="0 0 32 34">
      <path d="M0 4h14l4 4H0z" fill="#e0a01a" />
      <rect x="0" y="7" width="32" height="27" rx="1" fill="#fbd766" />
      <path d="M8 34v-9c0-2 1-3 3-3h10c2 0 3 1 3 3v9h-4v-6h-8v6z" fill="#3f9bd9" />
    </svg>
  );
}

function Store() {
  return (
    <svg width="36" height="38" viewBox="0 0 36 38">
      <path d="M9 8V1h18v7" fill="none" stroke="#29a8e0" strokeWidth="2" />
      <path d="M0 6h36v28c0 2-2 4-4 4H4c-2 0-4-2-4-4z" fill="#f1f1f1" />
      <rect x="10" y="14" width="7.5" height="7.5" fill="#f25022" />
      <rect x="18.5" y="14" width="7.5" height="7.5" fill="#7fba00" />
      <rect x="10" y="22.5" width="7.5" height="7.5" fill="#00a4ef" />
      <rect x="18.5" y="22.5" width="7.5" height="7.5" fill="#ffb900" />
    </svg>
  );
}

function Mail() {
  return (
    <svg width="36" height="34" viewBox="0 0 36 34">
      <path d="M0 12L18 0l18 12v4H0z" fill="#0a5fb0" />
      <path d="M6 10h24v8L18 25 6 18z" fill="#f4f4f4" />
      <path d="M0 14l18 11L36 14v20H0z" fill="#2fb4ee" />
      <path d="M18 25l18 9H0z" fill="#1585d8" />
    </svg>
  );
}

function Cisco() {
  return (
    <svg width="32" height="34" viewBox="0 0 32 34">
      <ellipse cx="16" cy="17" rx="16" ry="17" fill="#d8dee0" />
      <path d="M1 16C5 8 12 4 21 1l4 3C16 7 8 12 4 26 1 23 0 20 1 16z" fill="#3f9e46" />
      <path d="M11 5c2 6 7 10 20 12v5C20 20 12 15 8 7z" fill="#2f6fa8" />
      <path d="M24 19c1 5-1 10-5 14l5-2c4-3 6-8 7-11z" fill="#2f6fa8" />
    </svg>
  );
}

function Chrome({ blurred }: { blurred: boolean }) {
  return (
    <svg width="40" height="38" viewBox="0 0 40 38">
      <path d="M18 18L3 9C6 4 12 0 18 0s13 4 15.5 9z" fill="#e94335" />
      <path d="M18 18h15.5c2 5 1 11-2 15S22 37 18 36z" fill="#fbbc05" />
      <path d="M18 18v18C8 36 0 28 0 18c0-3 1-6 3-9z" fill="#34a853" />
      <circle cx="18" cy="18" r="8.5" fill="#fff" />
      <circle cx="18" cy="18" r="6.5" fill="#4285f4" />
      <circle cx="29" cy="27" r="11" fill={blurred ? "#c9c9c9" : "#3a3833"} />
      <ellipse cx="29" cy="25" rx="5" ry="6.5" fill={blurred ? "#ececec" : "#8d8577"} />
    </svg>
  );
}

function Idea() {
  return (
    <svg width="30" height="31" viewBox="0 0 30 31">
      <defs>
        <linearGradient id="ij" x1="0" y1="0" x2="1" y2="1">
          <stop offset="0" stopColor="#fc801d" />
          <stop offset=".35" stopColor="#fe2857" />
          <stop offset=".7" stopColor="#087cfa" />
          <stop offset="1" stopColor="#087cfa" />
        </linearGradient>
      </defs>
      <rect width="30" height="31" fill="url(#ij)" />
      <rect x="3" y="3" width="24" height="25" fill="#000" />
      <text x="6" y="16" fontSize="12" fontWeight="700" fill="#fff" fontFamily="Noto Sans">IJ</text>
      <rect x="6" y="22" width="9" height="2" fill="#fff" />
    </svg>
  );
}

function ExcelIcon() {
  return (
    <svg width="38" height="36" viewBox="0 0 38 36">
      <path d="M9 0h29v18H9z" fill="#21a366" />
      <path d="M23 0h12c2 0 3 1 3 3v6H23z" fill="#33c481" />
      <path d="M9 18h29v15c0 2-1 3-3 3H12c-2 0-3-1-3-3z" fill="#107c41" />
      <rect x="0" y="8" width="19" height="19" rx="2" fill="#0f7b40" />
      <text x="5" y="23" fontSize="15" fontWeight="700" fill="#fff" fontFamily="Noto Sans">X</text>
    </svg>
  );
}

function Slot({ active, running, children }: { active?: boolean; running?: boolean; children: React.ReactNode }) {
  return (
    <div className={`w-[75px] h-full shrink-0 flex flex-col items-center ${active ? "bg-[#4d5e68]" : ""}`}>
      <div className="h-[57px] flex items-center pt-[3px]">{children}</div>
      {running && <div className={`h-[3px] bg-[#76b9ed] ${active ? "w-full" : "w-[61px]"}`} />}
    </div>
  );
}

function Taskbar() {
  return (
    <div className="h-[60px] shrink-0 flex items-center text-white bg-linear-to-r from-[#20363f] from-60% to-[#1a2a47] to-80%">
      <div className="w-[73px] flex justify-center">
        <svg width="24" height="24" viewBox="0 0 24 24">
          <path d="M0 3.4l10-1.4v9.4H0zM11 1.9L24 0v11.4H11zM0 12.6h10V22L0 20.6zM11 12.6h13V24l-13-1.9z" fill="#fff" />
        </svg>
      </div>
      <div className="w-[514px] h-[56px] box-border bg-[#f0f0f0] border-2 border-[#b5b5b5] flex items-center text-[21px] text-[#1a1a1a]">
        <svg width="24" height="24" viewBox="0 0 24 24" className="ml-[15px]">
          <circle cx="15" cy="9" r="8" fill="none" stroke="#111" strokeWidth="1.6" />
          <path d="M9.5 15L1 23.5" stroke="#111" strokeWidth="1.6" />
        </svg>
        <span className="ml-[19px] whitespace-nowrap pt-[3px]">Type here to search</span>
      </div>
      <div className="w-[77px] flex justify-center pr-[4px]">
        <svg width="23" height="24" viewBox="0 0 23 24">
          <path d="M0 1h16v4H0M3 7h15v10H3zM0 19h16M0 19v4M16 19v4M21 0v4M21 9v15" fill="none" stroke="#fff" strokeWidth="1.3" />
          <rect x="20" y="6" width="3" height="3" fill="#fff" />
        </svg>
      </div>
      <Slot running><Edge /></Slot>
      <Slot running><Folder /></Slot>
      <Slot><Store /></Slot>
      <Slot><Mail /></Slot>
      <Slot running><Cisco /></Slot>
      <Slot running><Chrome blurred={false} /></Slot>
      <Slot running><Chrome blurred /></Slot>
      <Slot running><Idea /></Slot>
      <Slot active running><ExcelIcon /></Slot>
      <svg width="18" height="10" viewBox="0 0 18 10" className="ml-[226px]">
        <path d="M1 9l8-8 8 8" fill="none" stroke="#fff" strokeWidth="1.4" />
      </svg>
      <svg width="24" height="16" viewBox="0 0 24 16" className="ml-[15px]">
        <path d="M5 16c-6 0-6-7 0-8 2-8 11-9 14-3 5 0 6 11 0 11z" fill="#0f78d4" />
        <path d="M5 16c-6 0-5-6 0-6 7-2 14-2 19 1 0 3-2 5-5 5z" fill="#2ea8ef" />
      </svg>
      <svg width="23" height="12" viewBox="0 0 23 12" className="ml-[13px]">
        <rect x=".75" y=".75" width="20" height="10.5" fill="none" stroke="#fff" strokeWidth="1.5" />
        <rect x="3" y="3" width="10" height="6" fill="#fff" />
        <rect x="21.5" y="4" width="1.5" height="4" fill="#fff" />
      </svg>
      <svg width="18" height="18" viewBox="0 0 18 18" className="ml-[16px]">
        <path d="M1 17C1 8 8 1 17 1M5 17c0-7 5-12 12-12M9 17c0-4 4-8 8-8" fill="none" stroke="#c9ced6" strokeWidth="1.2" />
        <circle cx="15" cy="16" r="1.8" fill="#fff" />
      </svg>
      <svg width="22" height="18" viewBox="0 0 22 18" className="ml-[15px]">
        <path d="M1 6h4l6-5v16l-6-5H1z" fill="none" stroke="#fff" strokeWidth="1.2" />
        <path d="M14 6c1.500 2 1.500 4 0 6M17 3.500c3 3.500 3 7.500 0 11" fill="none" stroke="#fff" strokeWidth="1.2" />
      </svg>
      <div className="ml-[9px] w-[100px] flex flex-col items-center text-[18px] leading-[27px] text-[#f3f3f3]">
        <span className="whitespace-nowrap">11:28 PM</span>
        <span className="whitespace-nowrap">10/24/2022</span>
      </div>
      <div className="relative ml-[20px] w-[24px] h-[22px] mt-[-4px]">
        <svg width="24" height="24" viewBox="0 0 24 24">
          <path d="M0 0h24v18H12l-4 4v-4H0z" fill="#fff" />
          <path d="M4 5h16M4 9h16M4 13h12" stroke="#222" />
        </svg>
        <div className="absolute left-[12px] top-[12px] w-[24px] h-[24px] rounded-full bg-[#3c3c3c] border border-[#777] flex items-center justify-center text-[16px]">1</div>
      </div>
      <div className="ml-[31px] w-px h-full bg-[#5f6f86]" />
    </div>
  );
}

export default function App() {
  return (
    <div className="w-[1920px] h-[1080px] overflow-hidden flex flex-col font-['Noto_Sans',sans-serif]">
      <TitleBar />
      <Ribbon />
      <FormulaBar />
      <Sheet />
      <SheetBar />
      <StatusBar />
      <Taskbar />
    </div>
  );
}
